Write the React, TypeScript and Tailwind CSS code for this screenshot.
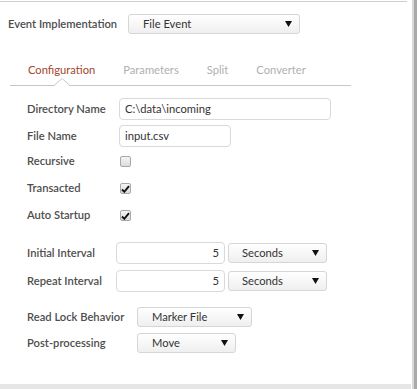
import React from 'react'

function Arrow() {
  return (
    <svg width="7" height="6" viewBox="0 0 7 6" className="shrink-0">
      <polygon points="0,0 7,0 3.5,6" fill="#111" />
    </svg>
  )
}

function Select({ value, width, pad = 'pl-[14px]' }: { value: string; width: string; pad?: string }) {
  return (
    <div
      className={`${width} ${pad} h-[20px] flex items-center justify-between pr-[7px] rounded-[3px] border border-[#d6d6d6] bg-gradient-to-b from-white to-[#efefef] text-[11.2px] text-[#333]`}
    >
      <span>{value}</span>
      <Arrow />
    </div>
  )
}

function TextBox({ value, width, right = false }: { value: string; width: string; right?: boolean }) {
  return (
    <div
      className={`${width} h-[22px] flex items-center px-[5px] rounded-[4px] border border-[#d9d9d9] bg-white text-[11.2px] text-[#333] ${
        right ? 'justify-end' : ''
      }`}
    >
      {value}
    </div>
  )
}

function Check({ checked }: { checked: boolean }) {
  return (
    <div className="w-[11px] h-[11px] rounded-[2px] border border-[#a8a8a8] bg-gradient-to-b from-[#f4f4f4] to-[#dcdcdc] flex items-center justify-center">
      {checked && (
        <svg width="9" height="8" viewBox="0 0 9 8">
          <path d="M1 4.5 L3.3 6.8 L8 1.2" stroke="#111" strokeWidth="1.9" fill="none" />
        </svg>
      )}
    </div>
  )
}

const label = 'text-[11.2px] font-semibold text-[#4d4d4d] whitespace-nowrap'

const TABS = ['Configuration', 'Parameters', 'Split', 'Converter']

export default function App() {
  return (
    <div className="w-[417px] h-[389px] flex bg-white font-['Lato',sans-serif] overflow-hidden">
      <div className="w-[412px] flex flex-col">
        <div className="mt-[1px] h-px w-[407px] bg-[#cfcfcf]" />

        <div className="mt-[12px] flex items-center pl-[8px]">
          <span className={`${label} w-[120px]`}>Event Implementation</span>
          <Select value="File Event" width="w-[172px]" />
        </div>

        <div className="mt-[29px] ml-[10px] w-[341px] flex pl-[4px] border-b border-[#c8c8c8]">
          {TABS.map((t, i) => (
            <div
              key={t}
              className={`relative px-[14px] pb-[8px] text-[11.2px] leading-[14px] ${
                i === 0 ? 'text-[#a3472f]' : 'text-[#b0b0b0]'
              }`}
            >
              {t}
              {i === 0 && (
                <svg
                  width="16"
                  height="8"
                  viewBox="0 0 16 8"
                  className="absolute left-1/2 -translate-x-1/2 -bottom-[1px]"
                >
                  <polygon points="0,8 8,0.5 16,8" fill="white" />
                  <polyline points="0,7.5 8,0.5 16,7.5" stroke="#c8c8c8" fill="none" />
                </svg>
              )}
            </div>
          ))}
        </div>

        <div className="mt-[12px] pl-[27px] flex flex-col gap-[5px]">
          <div className="flex items-center">
            <span className={`${label} w-[92px]`}>Directory Name</span>
            <TextBox value="C:\data\incoming" width="w-[212px]" />
          </div>
          <div className="flex items-center">
            <span className={`${label} w-[92px]`}>File Name</span>
            <TextBox value="input.csv" width="w-[112px]" />
          </div>
        </div>

        <div className="mt-[1px] pl-[27px] flex flex-col">
          {[
            ['Recursive', false],
            ['Transacted', true],
            ['Auto Startup', true],
          ].map(([name, on]) => (
            <div key={name as string} className="flex items-center h-[27px]">
              <span className={`${label} w-[93px]`}>{name as string}</span>
              <Check checked={on as boolean} />
            </div>
          ))}
        </div>

        <div className="mt-[13px] pl-[27px] flex flex-col gap-[6px]">
          {['Initial Interval', 'Repeat Interval'].map((n) => (
            <div key={n} className="flex items-center">
              <span className={`${label} w-[89px]`}>{n}</span>
              <TextBox value="5" width="w-[109px]" right />
              <div className="ml-[3px]">
                <Select value="Seconds" width="w-[99px]" pad="pl-[13px]" />
              </div>
            </div>
          ))}
        </div>

        <div className="mt-[15px] pl-[27px] flex flex-col gap-[6px]">
          <div className="flex items-center">
            <span className={`${label} w-[110px]`}>Read Lock Behavior</span>
            <Select value="Marker File" width="w-[115px]" />
          </div>
          <div className="flex items-center">
            <span className={`${label} w-[110px]`}>Post-processing</span>
            <Select value="Move" width="w-[99px]" />
          </div>
        </div>

        <div className="mt-auto h-[5px] w-[411px] bg-[#e6e6e6]" />
      </div>
      <div className="w-[5px] flex">
        <div className="w-[2px] bg-[#d9d9d9]" />
        <div className="w-[3px] bg-[#a9a9a9]" />
      </div>
    </div>
  )
}
